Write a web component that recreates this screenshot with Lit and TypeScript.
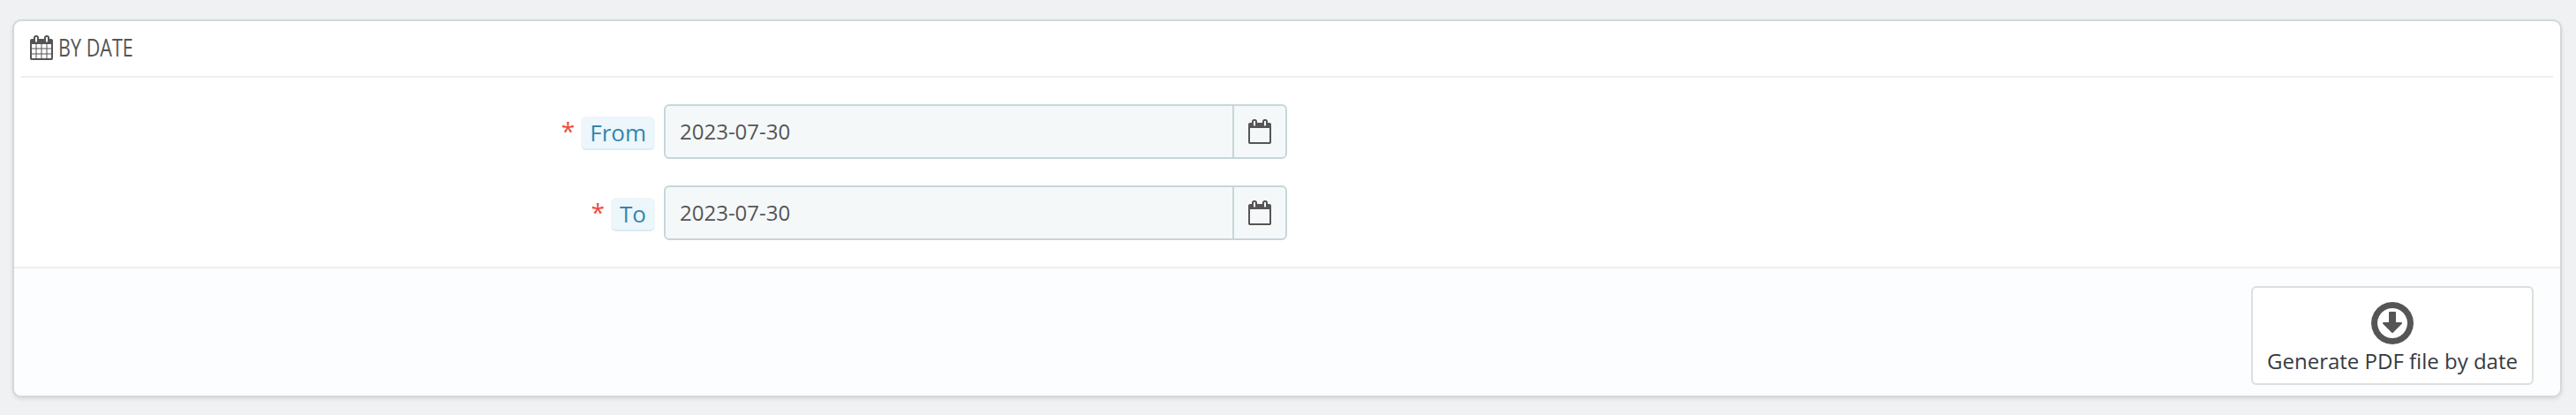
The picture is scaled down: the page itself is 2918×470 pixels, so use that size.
import { LitElement, html, css, svg } from "lit";
import { customElement, property } from "lit/decorators.js";

const tabs =
  "M512 448v-288q0-13-9.5-22.5t-22.5-9.5h-64q-13 0-22.5 9.5t-9.5 22.5v288q0 13 9.5 22.5t22.5 9.5h64q13 0 22.5-9.5t9.5-22.5zM1280 448v-288q0-13-9.5-22.5t-22.5-9.5h-64q-13 0-22.5 9.5t-9.5 22.5v288q0 13 9.5 22.5t22.5 9.5h64q13 0 22.5-9.5t9.5-22.5z";
const frame =
  "M1664 384v1280q0 52-38 90t-90 38h-1408q-52 0-90-38t-38-90v-1280q0-52 38-90t90-38h128v-96q0-66 47-113t113-47h64q66 0 113 47t47 113v96h384v-96q0-66 47-113t113-47h64q66 0 113 47t47 113v96h128q52 0 90 38t38 90z";
const grid =
  "M128 1664h288v-288h-288zM480 1664h320v-288h-320zM128 1312h288v-320h-288zM480 1312h320v-320h-320zM128 928h288v-288h-288zM864 1664h320v-288h-320zM480 928h320v-288h-320zM1248 1664h288v-288h-288zM864 1312h320v-320h-320zM1248 1312h288v-320h-288zM864 928h320v-288h-320zM1248 928h288v-288h-288z";
const blank = "M128 1664h1408v-1024h-1408z";
const circleDown =
  "M1120 928q0 12-10 24l-319 319q-11 9-23 9t-23-9l-320-320q-15-16-7-35 8-20 30-20h192v-352q0-14 9-23t23-9h192q14 0 23 9t9 23v352h192q14 0 23 9t9 23zM768 384q-148 0-273 73t-198 198-73 273 73 273 198 198 273 73 273-73 198-198 73-273-73-273-198-198-273-73zM1536 928q0 209-103 385.5t-279.5 279.5-385.5 103-385.5-103-279.5-279.5-103-385.5 103-385.5 279.5-279.5 385.5-103 385.5 103 279.5 279.5 103 385.5z";

const shape = (d: string) => svg`<path fill="currentColor" fill-rule="evenodd" d=${d}></path>`;

@customElement("date-field")
export class DateField extends LitElement {
  @property() label = "";
  @property() value = "";

  static styles = css`
    :host {
      display: flex;
      height: 62px;
    }
    .label {
      box-sizing: border-box;
      width: 728px;
      padding: 14px 10px 0 0;
      display: flex;
      justify-content: flex-end;
      align-items: flex-start;
      font-size: 26px;
      line-height: 36px;
    }
    .star {
      color: #f04a3a;
      font-size: 28px;
      margin-right: 7px;
      margin-top: -2px;
    }
    .tip {
      box-sizing: border-box;
      height: 38px;
      padding: 0 10px;
      color: #3586ae;
      background: #ecf6fb;
      border-bottom: 2px solid #d8edf7;
      border-radius: 6px;
    }
    .group {
      box-sizing: border-box;
      display: flex;
      width: 706px;
      border: 2px solid #c7d6db;
      border-radius: 6px;
      background: #f5f8f9;
      color: #555;
    }
    .value {
      flex: 1;
      padding-left: 16px;
      font-size: 24px;
      line-height: 58px;
    }
    .addon {
      box-sizing: border-box;
      width: 60px;
      padding: 15px 0 0 16px;
      border-left: 2px solid #c7d6db;
    }
    .cal {
      display: block;
      width: 26px;
      height: 28px;
    }
  `;

  render() {
    return html`
      <div class="label"><span class="star">*</span><span class="tip">${this.label}</span></div>
      <div class="group">
        <div class="value">${this.value}</div>
        <div class="addon">
          <svg class="cal" viewBox="0 0 1664 1792">${shape(frame + tabs + blank)}</svg>
        </div>
      </div>
    `;
  }
}

@customElement("app-root")
export class AppRoot extends LitElement {
  static styles = css`
    :host {
      display: block;
      box-sizing: border-box;
      height: 470px;
      padding: 22px 16px 20px 14px;
      background: #eff1f2;
      font-family: "Open Sans", "Noto Sans", sans-serif;
      color: #555;
    }
    .panel {
      box-sizing: border-box;
      height: 428px;
      display: flex;
      flex-direction: column;
      background: #fff;
      border: 2px solid #d3d8db;
      border-radius: 10px;
      box-shadow: 0 2px 4px rgba(0, 0, 0, 0.1);
      overflow: hidden;
    }
    .heading {
      box-sizing: border-box;
      height: 64px;
      margin: 0 8px;
      padding: 16px 0 0 10px;
      display: flex;
      align-items: flex-start;
      border-bottom: 2px solid #eee;
    }
    .cal {
      display: block;
      width: 26px;
      height: 28px;
    }
    .title {
      margin: -1px 0 0 5.5px;
      font-size: 26.5px;
      font-weight: 500;
      line-height: 30px;
      white-space: nowrap;
      transform: scaleX(0.815);
      transform-origin: 0 0;
    }
    .form {
      flex: 1;
      padding: 30px 8px 0;
      display: flex;
      flex-direction: column;
      gap: 30px;
    }
    .footer {
      box-sizing: border-box;
      height: 146px;
      padding: 20px 30px 0 0;
      display: flex;
      justify-content: flex-end;
      align-items: flex-start;
      background: #fcfdfe;
      border-top: 2px solid #eee;
    }
    .button {
      box-sizing: border-box;
      width: 320px;
      height: 112px;
      padding: 16px 0 0;
      display: flex;
      flex-direction: column;
      align-items: center;
      background: #fff;
      border: 2px solid #dedede;
      border-radius: 6px;
      color: #363a41;
      font: inherit;
      font-size: 24px;
      line-height: 38px;
      white-space: nowrap;
    }
    .down {
      display: block;
      width: 48px;
      height: 48px;
      color: #555;
    }
  `;

  render() {
    return html`
      <section class="panel">
        <div class="heading">
          <svg class="cal" viewBox="0 0 1664 1792">${shape(frame + tabs + grid)}</svg>
          <span class="title">BY DATE</span>
        </div>
        <div class="form">
          <date-field label="From" value="2023-07-30"></date-field>
          <date-field label="To" value="2023-07-30"></date-field>
        </div>
        <div class="footer">
          <button class="button">
            <svg class="down" viewBox="0 160 1536 1536">${shape(circleDown)}</svg>
            <span>Generate PDF file by date</span>
          </button>
        </div>
      </section>
    `;
  }
}
